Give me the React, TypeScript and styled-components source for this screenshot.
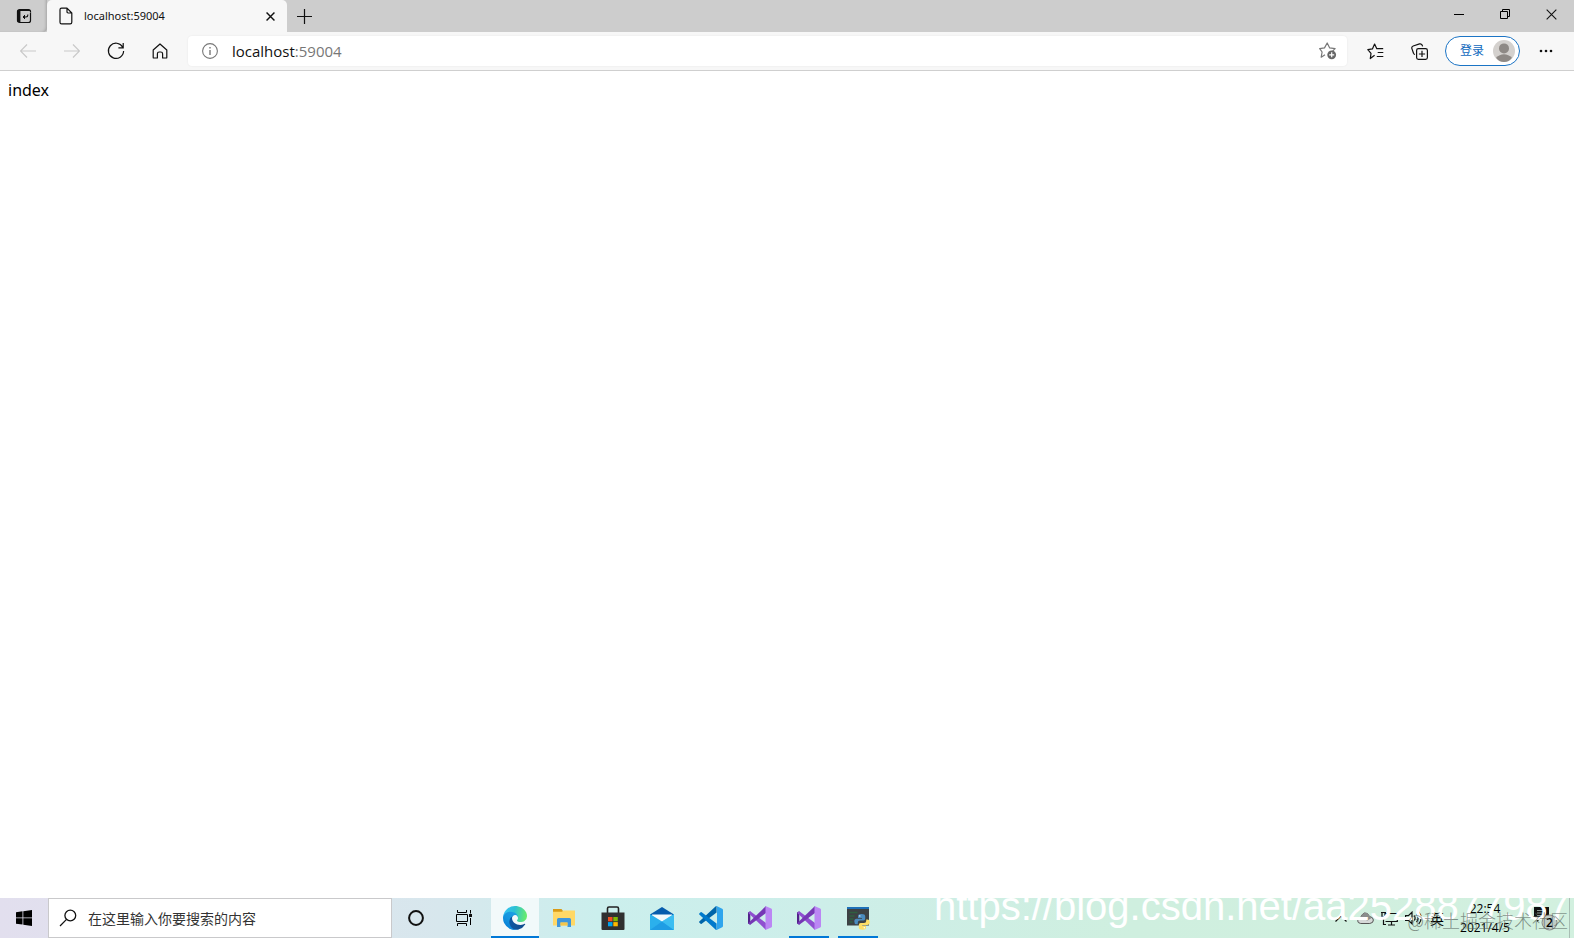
import React from 'react';
import styled, { createGlobalStyle } from 'styled-components';

const GlobalStyle = createGlobalStyle`
  * { box-sizing: border-box; }
  html, body { margin: 0; background: #fff; }
  body, button, input {
    font-family: "Noto Sans", "Noto Sans CJK SC", sans-serif;
  }
  button { border: 0; padding: 0; background: none; color: inherit; }
  svg { display: block; flex: none; }
`;

const Screen = styled.div`
  display: flex;
  flex-direction: column;
  min-height: 100vh;
`;

const TitleBar = styled.header`
  display: flex;
  height: 32px;
  background: #cdcdcd;
`;

const TabActions = styled.button`
  display: flex;
  align-items: center;
  justify-content: center;
  width: 47px;
  background: #cdcdcd;
  border-bottom-right-radius: 4px;
  box-shadow: inset -3px -1px 3px -2px rgba(0, 0, 0, 0.2);
`;

const Tab = styled.div`
  display: flex;
  align-items: center;
  width: 240px;
  padding: 0 10px 0 12px;
  gap: 11px;
  background: #f7f7f7;
  border-radius: 5px 5px 0 0;
`;

const TabTitle = styled.span`
  flex: 1;
  font-size: 11px;
  line-height: 16px;
  color: #111;
`;

const BarButton = styled.button<{ $w: number }>`
  display: flex;
  align-items: center;
  justify-content: center;
  flex: none;
  width: ${(p) => p.$w}px;
`;

const WindowControls = styled.div`
  display: flex;
  height: 28px;
  margin-left: auto;
`;

const Toolbar = styled.nav`
  display: flex;
  align-items: stretch;
  height: 39px;
  padding: 4px 6px;
  background: #f7f7f7;
  border-bottom: 1px solid #cfcfcf;
`;

const AddressBar = styled.div`
  display: flex;
  align-items: center;
  flex: 1;
  margin: 0 6px;
  padding: 0 10px 0 14px;
  gap: 14px;
  background: #fff;
  border-radius: 4px;
  box-shadow: 0 0 2px rgba(0, 0, 0, 0.08);
`;

const Address = styled.div`
  flex: 1;
  font: 15px/22px "Open Sans", sans-serif;
  color: #777;

  b { font-weight: 400; color: #111; }
`;

const Profile = styled.button`
  display: flex;
  align-items: center;
  justify-content: flex-end;
  gap: 9px;
  width: 75px;
  margin: 0 4px;
  padding-right: 4px;
  border: 1px solid #1b74c5;
  border-radius: 15px;
  background: #fff;
  color: #0f68bd;
  font-size: 12px;
  line-height: 16px;
`;

const Page = styled.main`
  flex: 1;
  padding: 8px;
  font-size: 16px;
  line-height: 22px;
  color: #000;
`;

const Taskbar = styled.footer`
  position: relative;
  display: flex;
  height: 40px;
  overflow: hidden;
  background: linear-gradient(90deg, #e2dfee 0%, #dde4ee 18%, #d7e7ed 28%, #cbefed 38%, #cdeee9 52%, #cfefdf 72%, #d2f0df 100%);
`;

const Search = styled.label`
  display: flex;
  align-items: center;
  flex: none;
  width: 344px;
  padding-left: 10px;
  gap: 11px;
  background: #fff;
  border: 1px solid #c9c9cb;
`;

const SearchInput = styled.input`
  flex: 1;
  min-width: 0;
  padding: 0;
  border: 0;
  outline: 0;
  background: transparent;
  font-size: 14px;
  &::placeholder { color: #333; opacity: 1; }
`;

const SystemButtons = styled.div`
  display: flex;
  margin-right: 3px;
`;

const Apps = styled.div`
  display: flex;
  gap: 1px;
`;

const AppButton = styled.button<{ $active?: boolean; $open?: boolean }>`
  position: relative;
  display: flex;
  align-items: center;
  justify-content: center;
  flex: none;
  width: 48px;
  background: ${(p) => (p.$active ? 'rgba(255,255,255,.7)' : 'transparent')};

  &::after {
    content: "";
    position: absolute;
    bottom: 0;
    left: ${(p) => (p.$active ? 0 : 4)}px;
    right: ${(p) => (p.$active ? 0 : 4)}px;
    height: ${(p) => (p.$active || p.$open ? 2 : 0)}px;
    background: #0078d7;
  }
`;

const Tray = styled.div`
  display: flex;
  margin-left: auto;
`;

const TrayButton = styled.button`
  display: flex;
  align-items: center;
  justify-content: center;
  width: 24px;
  font-size: 14px;
`;

const Clock = styled.button`
  width: 72px;
  font: 12px/19px "Open Sans", sans-serif;
  text-align: center;
  color: #000;
`;

const Time = styled.span`
  display: block;
`;

const ActionCenter = styled.button`
  display: flex;
  align-items: center;
  justify-content: center;
  width: 48px;
`;

const ShowDesktop = styled.button`
  width: 5px;
  border-left: 1px solid #a9beb4;
`;

const LinkMark = styled.span`
  position: absolute;
  right: 4px;
  bottom: 9px;
  font: 40px/46px "Liberation Sans", sans-serif;
  color: #fff;
  white-space: nowrap;
  pointer-events: none;
`;

const CommunityMark = styled.span`
  position: absolute;
  right: 6px;
  bottom: 6px;
  font: 300 18px/24px "Noto Sans CJK SC", sans-serif;
  color: rgba(80, 90, 85, 0.65);
  white-space: nowrap;
  pointer-events: none;
`;

const line = { fill: 'none', stroke: '#111', strokeWidth: 1.2 } as const;

const TabActionsIcon = () => (
  <svg width="16" height="16" viewBox="0 0 16 16" fill="none" stroke="#111">
    <rect x="1.5" y="1.5" width="13" height="13" rx="2" strokeWidth="1.200" />
    <path d="M2 2.500h12" strokeWidth="1" />
    <path d="M5 4.500h9.500" stroke="#cdcdcd" strokeWidth=".8" />
    <path d="M3 2v12" strokeWidth="2.800" />
    <path d="M11.800 6.500v.8q0 1.700-1.800 1.700H7" strokeWidth="1.100" />
    <path d="M9 7 7 9l2 2" fill="#111" strokeWidth="1" />
  </svg>
);
const FileIcon = () => (
  <svg width="14" height="18" viewBox="0 0 14 18" {...line} strokeLinejoin="round">
    <path d="M2.600 1.200H8l4.800 4.800v9.200q0 1.600-1.600 1.600H2.600Q1 16.800 1 15.200V2.800Q1 1.200 2.600 1.200zM8 1.200v3.600Q8 6 9.200 6h3.600" />
  </svg>
);
const Close = ({ s, w }: { s: number; w: number }) => (
  <svg width={s} height={s} viewBox="0 0 10 10" fill="none" stroke="#111" strokeWidth={w}>
    <path d="m.6.6 8.800 8.800M9.400.6.6 9.400" />
  </svg>
);
const PlusIcon = () => (
  <svg width="15" height="15" viewBox="0 0 15 15" {...line}><path d="M7.500 0v15M0 7.500h15" /></svg>
);
const Arrow = ({ flip }: { flip?: boolean }) => (
  <svg width="16" height="14" viewBox="0 0 16 14" fill="none" stroke="#c9c9c9" strokeWidth="1.200">
    <path d={flip ? 'M0 7h15.500M9 .500 15.500 7 9 13.500' : 'M16 7H.500M7 .500.500 7 7 13.500'} />
  </svg>
);
const ReloadIcon = () => (
  <svg width="18" height="18" viewBox="0 0 18 18" {...line}>
    <path d="M15.700 5.200A7.600 7.600 0 1 0 16.600 9M16.200 1v4.800h-4.800" />
  </svg>
);
const HomeIcon = () => (
  <svg width="16" height="16" viewBox="0 0 16 16" {...line} strokeLinejoin="round">
    <path d="M1.200 7 8 1l6.800 6v7.400q0 .6-.6.6h-3.600v-4.200q0-1.800-1.800-1.800H7.200q-1.800 0-1.800 1.800V15H1.800q-.6 0-.6-.6z" />
  </svg>
);
const InfoIcon = () => (
  <svg width="16" height="16" viewBox="0 0 16 16" fill="none" stroke="#777">
    <circle cx="8" cy="8" r="7.400" strokeWidth="1.100" /><path d="M8 7v5M8 4v1.500" strokeWidth="1.400" />
  </svg>
);
const StarAddIcon = () => (
  <svg width="18" height="18" viewBox="0 0 18 18" fill="none" stroke="#777" strokeWidth="1.200" strokeLinejoin="round">
    <path d="m6 12.800-3.800 2.400.9-5.200L.7 6.600l4.800-.7L8.200 1l2.500 4.900 5.400.7-2.500 2.600" />
    <circle cx="12.700" cy="12.800" r="4.400" fill="#666" stroke="none" />
    <path d="M12.700 10.300v5M10.200 12.800h5" stroke="#fff" />
  </svg>
);
const FavoritesIcon = () => (
  <svg width="17" height="17" viewBox="0 0 17 17" {...line} strokeLinejoin="round">
    <path d="m7.600 12.300-4.300 3.300.7-5.200L.8 6.600l4.600-.7L7.600 1l2.200 4.700h6.400M10.700 9.500h5.600M9.800 13.500h6.500" />
  </svg>
);
const CollectionsIcon = () => (
  <svg width="17" height="17" viewBox="0 0 17 17" {...line}>
    <path d="M4 11.500q-1-.2-1.500-1.300L.9 5.600Q.3 3.700 2.200 3L8.500.9q1.800-.5 2.600 1.200l.5 1.300" />
    <rect x="5.600" y="5.600" width="10.800" height="10.800" rx="1.800" /><path d="M11 7.800V14M7.900 11h6.200" />
  </svg>
);
const Avatar = () => (
  <svg width="22" height="22" viewBox="0 0 22 22">
    <circle cx="11" cy="11" r="11" fill="#d4d1ce" />
    <circle cx="11" cy="8.400" r="5" fill="#8e8985" />
    <path d="M3 17.800q3.500-3.600 8-3.600t8 3.600Q16 22 11 22t-8-4.200z" fill="#8e8985" />
  </svg>
);
const MoreIcon = () => (
  <svg width="14" height="4" viewBox="0 0 14 4" fill="#111">
    <circle cx="2" cy="2" r="1.300" /><circle cx="7" cy="2" r="1.300" /><circle cx="12" cy="2" r="1.300" />
  </svg>
);

const WindowsIcon = () => (
  <svg width="16" height="16" viewBox="0 0 16 16">
    <path d="M0 2.200 6.500 1.300v6.200H0zM7.300 1.200 16 0v7.500H7.300zM0 8.300h6.500v6.300L0 13.700zM7.300 8.300H16V16l-8.700-1.300z" />
  </svg>
);
const SearchIcon = () => (
  <svg width="18" height="18" viewBox="0 0 18 18" {...line} strokeWidth="1.300">
    <circle cx="11.300" cy="6.500" r="5.400" /><path d="M7.500 10.400 1 17" />
  </svg>
);
const CortanaIcon = () => (
  <svg width="16" height="16" viewBox="0 0 16 16" fill="none" stroke="#111" strokeWidth="2">
    <circle cx="8" cy="8" r="6.900" />
  </svg>
);
const TaskViewIcon = () => (
  <svg width="17" height="16" viewBox="0 0 17 16" fill="none" stroke="#000" strokeWidth="1">
    <path d="M1.500 0v2.500h9V0M1.500 16v-2.500h9V16M.5 4.500h11v7H.5zM14.500 0v3.500M14.500 8v7" />
    <path d="M13 4h3v3h-3z" fill="#111" stroke="none" />
  </svg>
);
const EdgeIcon = () => (
  <svg width="24" height="24" viewBox="0 0 256 256">
    <defs>
      <linearGradient id="edgeDeep" x1="60" y1="177" x2="241" y2="177" gradientUnits="userSpaceOnUse">
        <stop offset="0" stopColor="#0c59a4" /><stop offset="1" stopColor="#114a8b" />
      </linearGradient>
      <linearGradient id="edgeBlue" x1="150" y1="100" x2="45" y2="230" gradientUnits="userSpaceOnUse">
        <stop offset="0" stopColor="#1b9de2" /><stop offset=".5" stopColor="#1595df" /><stop offset="1" stopColor="#0680d7" />
      </linearGradient>
      <linearGradient id="edgeGreen" x1="10" y1="70" x2="245" y2="110" gradientUnits="userSpaceOnUse">
        <stop offset="0" stopColor="#35c1f1" /><stop offset=".45" stopColor="#2cc0d5" /><stop offset="1" stopColor="#66eb6e" />
      </linearGradient>
    </defs>
    <path fill="url(#edgeDeep)" d="M231 190.500c-3.400 1.800-6.900 3.400-10.500 4.700a101 101 0 0 1-35.900 6.500c-47.300 0-88.500-32.500-88.500-74.300a31.500 31.500 0 0 1 16.400-27.300c-42.800 1.800-53.800 46.400-53.800 72.500 0 73.900 68.100 81.400 82.800 81.400 7.900 0 19.800-2.300 27-4.600l1.300-.4a128 128 0 0 0 66.600-52.800 4 4 0 0 0-5.400-5.700z" />
    <path fill="url(#edgeBlue)" d="M105.700 241.400a79 79 0 0 1-22.700-21.300 80.700 80.700 0 0 1 29.500-120c3.200-1.500 8.500-4.100 15.600-4a32.400 32.400 0 0 1 25.700 13 32 32 0 0 1 6.300 18.700c0-.2 24.500-79.600-80-79.600-43.900 0-80 41.700-80 78.200a130 130 0 0 0 12.100 56 128 128 0 0 0 156.400 67 75.500 75.500 0 0 1-62.900-8z" />
    <path fill="url(#edgeGreen)" d="M152.300 148.900c-.8 1-3.300 2.500-3.300 5.700 0 2.600 1.700 5.100 4.700 7.200 14.400 10 41.500 8.700 41.600 8.700a59.600 59.600 0 0 0 30.300-8.400A61.400 61.400 0 0 0 256 109.200c.3-22.400-8-37.300-11.300-43.900C223.500 23.900 177.700 0 128 0A128 128 0 0 0 0 126.200C.5 89.700 36.800 60.200 80 60.200c3.500 0 23.500.3 42 10.100 16.300 8.600 24.900 18.900 30.800 29.200 6.200 10.700 7.300 24.100 7.300 29.500s-2.700 13.300-7.800 19.900z" />
  </svg>
);
const ExplorerIcon = () => (
  <svg width="22" height="18" viewBox="0 0 22 18">
    <path d="M0 0h8.500L10 2v3H0z" fill="#d99b16" /><path d="M0 2.800h9L10.500 1.600H22V16.500H0z" fill="#ffd866" />
    <path d="M4 18V10.500Q4 9 5.500 9h11Q18 9 18 10.500V18h-3.500v-4.500h-7V18z" fill="#3f97db" />
    <path d="M7.500 13.500h7v3h-7z" fill="#f5c64b" />
  </svg>
);
const StoreIcon = () => (
  <svg width="24" height="24" viewBox="0 0 24 24">
    <path d="M6.500 7V2.500Q6.500 1 8 1h8q1.500 0 1.500 1.500V7" fill="none" stroke="#222" strokeWidth="1.600" />
    <path d="M.5 6.500h23V23q0 1-1 1h-21q-1 0-1-1z" fill="#303030" />
    <path d="M7 11h4.500v4.300H7z" fill="#f25022" /><path d="M12.300 11h4.500v4.300h-4.500z" fill="#7fba00" />
    <path d="M7 16.100h4.500v4.200H7z" fill="#00a4ef" /><path d="M12.300 16.100h4.500v4.200h-4.500z" fill="#ffb900" />
  </svg>
);
const MailIcon = () => (
  <svg width="24" height="23" viewBox="0 0 24 23">
    <path d="M0 7.500 12 0l12 7.500V13H0z" fill="#075cad" /><path d="M2 7.500h20v8H2z" fill="#f4fafc" />
    <path d="M0 7 12 14.500 24 7v16H0z" fill="#2bb0ec" /><path d="M0 23 12 14.500l12 8.500z" fill="#1f9de4" /><path d="M12 14.500 24 7v16z" fill="#43c4f4" opacity=".65" />
  </svg>
);
const VSCodeIcon = () => (
  <svg width="24" height="24" viewBox="0 0 24 24">
    <path d="M17.600 0v6.600L2.700 17.800q-.6.400-1.100 0L.3 16.600q-.5-.5 0-1L16.500.5q.5-.5 1.100-.5z" fill="#0065a9" />
    <path d="M17.600 24v-6.600L2.700 6.200q-.6-.4-1.100 0L.3 7.400q-.5.5 0 1l16.200 15.100q.5.500 1.100.5z" fill="#007acc" />
    <path d="M17.600 0 23.200 2.700q.8.400.8 1.300v16q0 .9-.8 1.300L17.600 24q-.8 0-1.300-.8 1.700.8 1.700-1V1.800q0-1.800-1.700-1 .5-.8 1.300-.8z" fill="#2fa5ed" />
  </svg>
);
const VisualStudioIcon = () => (
  <svg width="24" height="24" viewBox="0 0 24 24">
    <path d="M0 6.500 2.300 5.300V18.700L0 17.500z" fill="#52218a" />
    <path d="M2.300 5.300 18 17v7L.6 7.300Q0 6.500 1 5.900z" fill="#8f4fd0" />
    <path d="M2.300 18.700 18 7V0L.6 16.700q-.6.800.4 1.400z" fill="#7537b5" />
    <path d="m17.500 0 5.700 2.600q.8.400.8 1.200v16.400q0 .8-.8 1.200L17.500 24z" fill="#bb86f4" />
  </svg>
);
const PythonIcon = () => (
  <svg width="23" height="23" viewBox="0 0 23 23">
    <path d="M0 0h22v18.500H0z" fill="#3d4144" /><path d="M0 0h22v2H0z" fill="#1e70b8" />
    <path d="M2.500 5.500h8M2.500 9h5M2.500 12h4M2.500 15h3" stroke="#2f6040" strokeWidth="1.400" />
    <path d="M14.500 7q-3.500 0-3.500 2.200V11h4v.8H9.500Q7.300 11.800 7.300 14.500t2 2.800h1.500v-1.800q0-2 2.200-2h3.500q1.700 0 1.700-1.700V9.200Q18.200 7 14.500 7z" fill="#4b8bbe" />
    <path d="M15.500 22.800q3.500 0 3.500-2.200v-1.800h-3.800V18h5q2.500 0 2.500-2.700t-2.300-2.800h-1.200v1.600q0 2-2.200 2h-3.400q-1.800 0-1.800 1.800v2.700q0 2.200 3.700 2.200z" fill="#ffdf66" />
    <circle cx="12.800" cy="8.900" r=".7" fill="#fff" /><circle cx="17.300" cy="20.800" r=".7" fill="#fff" />
  </svg>
);
const CaretIcon = () => (
  <svg width="12" height="8" viewBox="0 0 12 8" {...line}><path d="m.5 7.500 5.500-5.500 5.500 5.500" /></svg>
);
const CloudIcon = () => (
  <svg width="17" height="12" viewBox="0 0 17 12">
    <path d="M3.700 11.500Q.5 11 .7 8.800 1 6.600 3.500 6.400 4 2.500 7.300 1q3.400-.8 5.300 3.500 3.600.6 3.800 3.500.1 3-3.600 3.500z" fill="#d6d9d8" stroke="#555" />
    <path d="M3.500 6.400Q4 2.500 7.300 1q3.400-.8 5.300 3.500l2 1.500-4 2.500z" fill="#8a8d8c" />
  </svg>
);
const NetworkIcon = () => (
  <svg width="17" height="15" viewBox="0 0 17 15" {...line}>
    <path d="M4.500 2.500h11.800v8H4.500M10.500 10.500V14M7 14h7M0 1.500h5M1 1.500v4h3v-4M2.500 5.500v8H5" />
  </svg>
);
const VolumeIcon = () => (
  <svg width="17" height="14" viewBox="0 0 17 14" {...line}>
    <path d="M.6 4.700h2.800L7 1.200v11.600L3.400 9.300H.6zM9.200 4.500q1.800 2.500 0 5M11.500 2.800q3.200 4.200 0 8.400M13.700.9q5 6.100 0 12.200" />
  </svg>
);
const NotificationIcon = () => (
  <svg width="25" height="26" viewBox="0 0 25 26">
    <path d="M1 2h15v12H7l-3 3v-3H1z" fill="#111" />
    <path d="M4 5.500h9M4 8h9M4 10.500h6" stroke="#8a9791" />
    <circle cx="16.500" cy="17.500" r="7.500" fill="#bfccc6" stroke="#888" />
    <text x="16.500" y="22" textAnchor="middle" fontSize="12" fontWeight="600" fontFamily="Open Sans">2</text>
  </svg>
);

export default function App() {
  return (
    <Screen>
      <GlobalStyle />
      <TitleBar>
        <TabActions aria-label="标签页操作"><TabActionsIcon /></TabActions>
        <Tab>
          <FileIcon />
          <TabTitle>localhost:59004</TabTitle>
          <BarButton $w={14} aria-label="关闭标签页"><Close s={9} w={1.6} /></BarButton>
        </Tab>
        <BarButton $w={34} aria-label="新建标签页"><PlusIcon /></BarButton>
        <WindowControls>
          <BarButton $w={46} aria-label="最小化">
            <svg width="10" height="10" viewBox="0 0 10 10"><path d="M0 5h10v1H0z" /></svg>
          </BarButton>
          <BarButton $w={46} aria-label="还原">
            <svg width="10" height="10" viewBox="0 0 10 10" fill="none" stroke="#000"><path d="M.5 2.500h7v7h-7zM2.500 2.500v-2h7v7h-2" /></svg>
          </BarButton>
          <BarButton $w={46} aria-label="关闭"><Close s={11} w={1} /></BarButton>
        </WindowControls>
      </TitleBar>
      <Toolbar>
        <BarButton $w={44} aria-label="后退"><Arrow /></BarButton>
        <BarButton $w={44} aria-label="前进"><Arrow flip /></BarButton>
        <BarButton $w={44} aria-label="刷新"><ReloadIcon /></BarButton>
        <BarButton $w={44} aria-label="主页"><HomeIcon /></BarButton>
        <AddressBar>
          <InfoIcon />
          <Address><b>localhost</b>:59004</Address>
          <BarButton $w={18} aria-label="收藏此页"><StarAddIcon /></BarButton>
        </AddressBar>
        <BarButton $w={44} aria-label="收藏夹"><FavoritesIcon /></BarButton>
        <BarButton $w={44} aria-label="集锦"><CollectionsIcon /></BarButton>
        <Profile>登录<Avatar /></Profile>
        <BarButton $w={44} aria-label="更多"><MoreIcon /></BarButton>
      </Toolbar>
      <Page>index</Page>
      <Taskbar>
        <AppButton aria-label="开始"><WindowsIcon /></AppButton>
        <Search>
          <SearchIcon />
          <SearchInput aria-label="搜索" placeholder="在这里输入你要搜索的内容" />
        </Search>
        <SystemButtons>
          <AppButton aria-label="Cortana"><CortanaIcon /></AppButton>
          <AppButton aria-label="任务视图"><TaskViewIcon /></AppButton>
        </SystemButtons>
        <Apps>
          <AppButton aria-label="Edge" $active><EdgeIcon /></AppButton>
          <AppButton aria-label="文件资源管理器"><ExplorerIcon /></AppButton>
          <AppButton aria-label="Store"><StoreIcon /></AppButton>
          <AppButton aria-label="邮件"><MailIcon /></AppButton>
          <AppButton aria-label="VS Code"><VSCodeIcon /></AppButton>
          <AppButton aria-label="Visual Studio"><VisualStudioIcon /></AppButton>
          <AppButton aria-label="Visual Studio" $open><VisualStudioIcon /></AppButton>
          <AppButton aria-label="Python" $open><PythonIcon /></AppButton>
        </Apps>
        <Tray>
          <TrayButton aria-label="显示隐藏的图标"><CaretIcon /></TrayButton>
          <TrayButton aria-label="OneDrive"><CloudIcon /></TrayButton>
          <TrayButton aria-label="网络"><NetworkIcon /></TrayButton>
          <TrayButton aria-label="音量"><VolumeIcon /></TrayButton>
          <TrayButton>英</TrayButton>
          <Clock><Time>22:54</Time><Time>2021/4/5</Time></Clock>
          <ActionCenter aria-label="通知"><NotificationIcon /></ActionCenter>
          <ShowDesktop aria-label="显示桌面" />
        </Tray>
        <LinkMark>https://blog.csdn.net/aa2528877987</LinkMark>
        <CommunityMark>@稀土掘金技术社区</CommunityMark>
      </Taskbar>
    </Screen>
  );
}
